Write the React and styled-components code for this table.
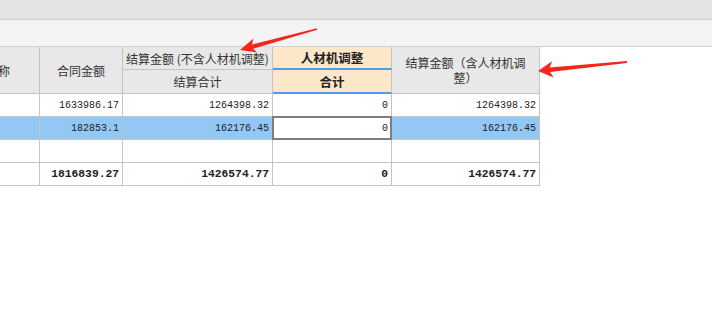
import React from "react";
import styled, { createGlobalStyle, css } from "styled-components";

const Global = createGlobalStyle`
  html, body {
    margin: 0;
    padding: 0;
    background: #ffffff;
  }
  body {
    font-family: "Noto Sans CJK SC", "Noto Sans", sans-serif;
    color: #333;
  }
`;

const Page = styled.div`
  position: relative;
  width: 712px;
  height: 316px;
  overflow: hidden;
  background: #fff;
`;

const TitleBar = styled.div`
  height: 19px;
  background: #e3e3e3;
  border-bottom: 1px solid #cfcfcf;
`;

const Toolbar = styled.div`
  height: 26px;
  background: #f4f4f4;
  border-bottom: 1px solid #d2d2d2;
`;

const Viewport = styled.div`
  overflow: hidden;
  width: 712px;
`;

/* the sheet is scrolled a little to the right, so the first column is half hidden */
const Grid = styled.div`
  display: grid;
  grid-template-columns: 83px 83px 150px 119px 148px;
  grid-template-rows: 23px 24px 23px 23px 23px 23px;
  margin-left: -43px;
  width: max-content;
`;

const HeadCell = styled.div`
  box-sizing: border-box;
  display: flex;
  align-items: center;
  justify-content: center;
  text-align: center;
  font-size: 12px;
  line-height: 15px;
  color: #333;
  background: #e8e8e8;
  border-right: 1px solid #c4c4c4;
  border-bottom: 1px solid #c4c4c4;
  white-space: nowrap;
  ${(p) => p.$span && css`grid-row: span ${p.$span};`}
  ${(p) =>
    p.$wrap &&
    css`
      white-space: normal;
      padding: 0 10px;
    `}
  ${(p) =>
    p.$peach &&
    css`
      background: #fde7c9;
      font-weight: 700;
      font-size: 12.5px;
      color: #222;
      border-bottom: 2px solid #4a9cec;
    `}
`;

const Cell = styled.div`
  position: relative;
  box-sizing: border-box;
  display: flex;
  align-items: center;
  justify-content: flex-end;
  padding-right: 3px;
  font-family: "Liberation Mono", "DejaVu Sans Mono", monospace;
  font-size: 10px;
  color: #222;
  background: ${(p) => (p.$selected ? "#93c8f4" : "#fff")};
  border-right: 1px solid #c4c4c4;
  border-bottom: 1px solid #c4c4c4;
  ${(p) =>
    p.$bold &&
    css`
      font-weight: 700;
      font-size: 11.3px;
    `}
  ${(p) =>
    p.$editing &&
    css`
      background: #fff;
      &::after {
        content: "";
        position: absolute;
        top: -1px;
        left: -1px;
        right: -1px;
        bottom: -1px;
        border: 2px solid #7e7e7e;
      }
    `}
`;

const ArrowLayer = styled.svg`
  position: absolute;
  left: 0;
  top: 0;
  pointer-events: none;
`;

const rows = [
  { values: ["", "1633986.17", "1264398.32", "0", "1264398.32"] },
  { values: ["", "182853.1", "162176.45", "0", "162176.45"], selected: true },
  { values: ["", "", "", "", ""] },
  { values: ["", "1816839.27", "1426574.77", "0", "1426574.77"], bold: true },
];

export default function App() {
  return (
    <Page>
      <Global />
      <TitleBar />
      <Toolbar />
      <Viewport>
        <Grid>
          <HeadCell $span={2}>名称</HeadCell>
          <HeadCell $span={2}>合同金额</HeadCell>
          <HeadCell>结算金额 (不含人材机调整)</HeadCell>
          <HeadCell $peach>人材机调整</HeadCell>
          <HeadCell $span={2} $wrap>
            结算金额（含人材机调整）
          </HeadCell>
          <HeadCell>结算合计</HeadCell>
          <HeadCell $peach>合计</HeadCell>
          {rows.map((row, r) =>
            row.values.map((v, c) => (
              <Cell
                key={`${r}-${c}`}
                $selected={row.selected && c !== 3}
                $editing={row.selected && c === 3}
                $bold={row.bold}
              >
                {v}
              </Cell>
            ))
          )}
        </Grid>
      </Viewport>
      <ArrowLayer width="712" height="316" viewBox="0 0 712 316">
        <polygon
          fill="#f5261d"
          points="240,50 253.4,38.6 252,44.4 316.8,28.2 317.2,29.8 253.1,48.7 257.2,52.4"
        />
        <polygon
          fill="#f5261d"
          points="538,71 552.1,61.2 549.7,67.4 626.9,61 627.1,63 550.1,72.1 553.7,77.6"
        />
      </ArrowLayer>
    </Page>
  );
}
